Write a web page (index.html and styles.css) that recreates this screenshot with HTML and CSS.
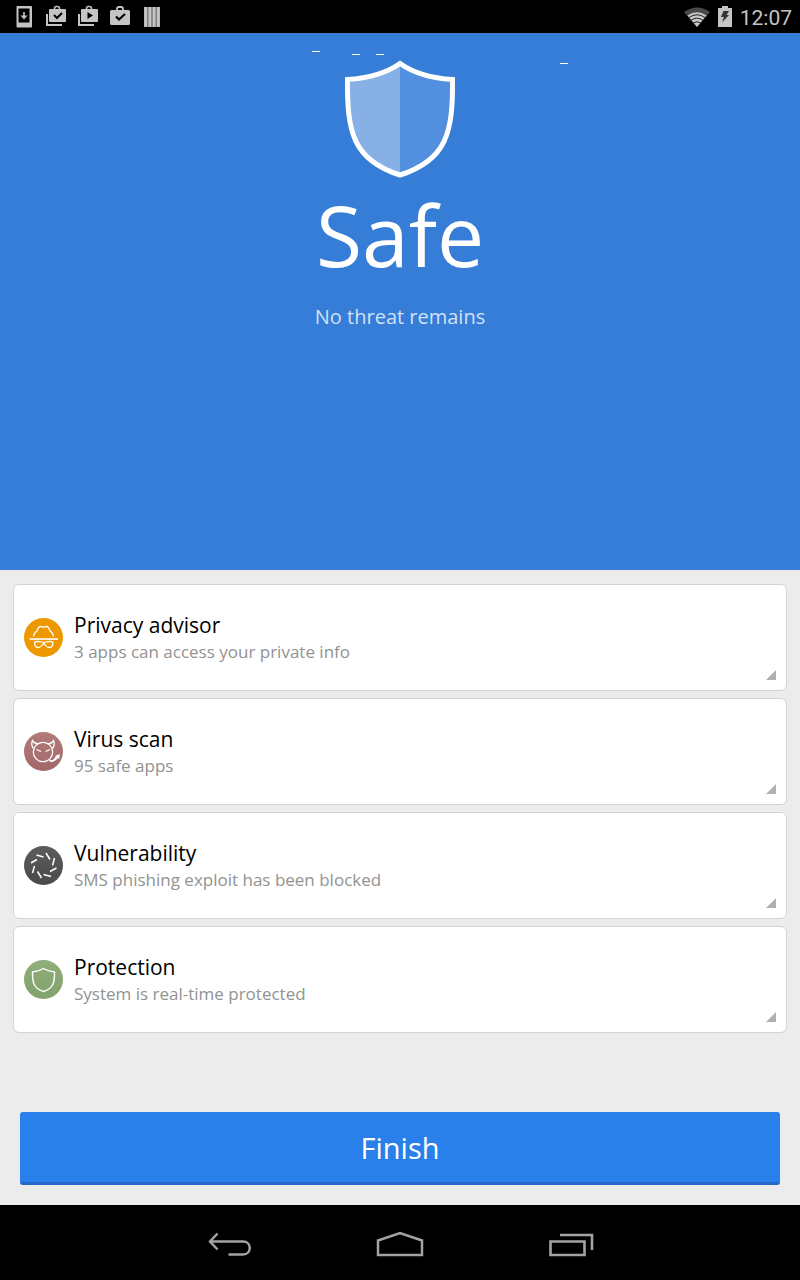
FILE: index.html
```html
<!DOCTYPE html>
<html lang="en">
<head>
<meta charset="utf-8">
<meta name="viewport" content="width=device-width, initial-scale=1">
<title>Security scan</title>
<link rel="stylesheet" href="styles.css">
</head>
<body>
<header class="status">
  <div class="status-icons">
    <svg width="32" height="32" viewBox="0 0 32 32" aria-hidden="true"><rect x="16.500" y="6" width="15.500" height="21.500" rx="1" fill="#c4c4c4"/><path d="M18.500 8.500h11v14h-11z" fill="#000"/><path d="M24 12v5" fill="none" stroke="#c4c4c4" stroke-width="1.600"/><path d="M20.500 15.500h7L24 19.500z" fill="#c4c4c4"/></svg>
    <svg width="32" height="32" viewBox="0 0 32 32" aria-hidden="true"><path d="M15 14v11h15" fill="none" stroke="#c4c4c4" stroke-width="2"/><rect x="17" y="9" width="17" height="13" rx="1" fill="#c4c4c4"/><path d="M22.500 9.500V8.500q0-2 2-2h1q2 0 2 2V9.500" fill="none" stroke="#c4c4c4" stroke-width="1.600"/><path d="M22 15l3 3 5-5" fill="none" stroke="#000" stroke-width="2"/></svg>
    <svg width="32" height="32" viewBox="0 0 32 32" aria-hidden="true"><path d="M15 14v11h15" fill="none" stroke="#c4c4c4" stroke-width="2"/><rect x="17" y="9" width="17" height="13" rx="1" fill="#c4c4c4"/><path d="M22.500 9.500V8.500q0-2 2-2h1q2 0 2 2V9.500" fill="none" stroke="#c4c4c4" stroke-width="1.600"/><path d="M23.500 12v7l5.500-3.500z" fill="#000"/></svg>
    <svg width="32" height="32" viewBox="0 0 32 32" aria-hidden="true"><rect x="14" y="10" width="20" height="15" rx="1.500" fill="#c4c4c4"/><path d="M21 10.500V9q0-2 2-2h2q2 0 2 2V10.500" fill="none" stroke="#c4c4c4" stroke-width="1.800"/><path d="M20 16.500l3 3 6-5.500" fill="none" stroke="#000" stroke-width="2.200"/></svg>
    <svg width="32" height="32" viewBox="0 0 32 32" aria-hidden="true"><path d="M16 7h16v19.500H16z" fill="#5c5c5c"/><path d="M17.700 7v20M21.900 7v20M26.100 7v20M30.300 7v20" stroke="#c4c4c4" stroke-width="3.200"/></svg>
  </div>
  <div class="status-right">
    <svg width="28" height="24" viewBox="0 0 28 24" aria-hidden="true"><path d="M1 6Q14-3 27 6L14 21z" fill="#4a4a4a"/><path d="M4.500 9.500Q14 3 23.500 9.500L14 21z" fill="#c8c8c8"/><path d="M6 11.500Q14 6 22 11.500M8 14.300Q14 10 20 14.300M10 17Q14 14.500 18 17" fill="none" stroke="#111" stroke-width=".9"/></svg>
    <svg width="16" height="24" viewBox="0 0 16 24" aria-hidden="true"><path d="M1 2h4V0h6v2h4v19H1z" fill="#c4c4c4"/><path d="M6.500 5H12l-2.500 4H12L5 16.500 7 11H4z" fill="#333"/></svg>
    <time>12:07</time>
  </div>
</header>

<main class="screen">
  <section class="hero">
    <svg class="sparks" width="256" height="14" viewBox="0 0 256 14" aria-hidden="true"><path d="M0 1.500h8M40 4.500h8M64 4.500h8M248 13.500h8" stroke="#fff"/></svg>
    <svg class="shield" width="112" height="120" viewBox="0 0 112 120" aria-hidden="true">
      <path d="M56 5Q36 19 4 21C3 74 9 102 56 117z" fill="#86b0e6"/>
      <path d="M56 5Q76 19 108 21C109 74 103 102 56 117z" fill="#538fdf"/>
      <path d="M56 5.500Q36 19.500 3.500 21.500C3 74 9 102 56 117C103 102 109 74 108.500 21.500Q76 19.500 56 5.500z" fill="none" stroke="#fff" stroke-width="5"/>
    </svg>
    <h1>Safe</h1>
    <p>No threat remains</p>
  </section>

  <section class="cards" aria-label="Scan results">
    <button class="card" type="button">
      <svg class="badge" viewBox="0 0 39 39" aria-hidden="true"><circle cx="19.500" cy="19.500" r="19.500" fill="#ee9800"/><g fill="none" stroke="#fff" stroke-width="1.300"><path d="M9.500 18.500C10 15 11 14 13 13c1-3 2-4.500 3.500-4.500 1.500 0 2 .8 3 .8s1.500-.8 3-.8S25 10 26 13c2 1 3 2 3.500 5.500"/><path d="M5.500 21h28.500" stroke-width="1.600"/><path d="M10.500 24c2-.6 5-.6 7 0 1.500.5 3 .5 4.500 0 2-.6 5-.6 7 0 0 3-1 5.500-3.500 5.500-3 0-4-1.500-5.700-4.500C18 28 17 29.500 14 29.500c-2.500 0-3.500-2.500-3.500-5.500z"/></g></svg>
      <span class="card-text"><span class="card-title">Privacy advisor</span><span class="card-note">3 apps can access your private info</span></span>
    </button>
    <button class="card" type="button">
      <svg class="badge" viewBox="0 0 39 39" aria-hidden="true"><defs><linearGradient id="red" x2="0" y2="1"><stop stop-color="#b17c7c"/><stop offset="1" stop-color="#a26868"/></linearGradient></defs><circle cx="19.500" cy="19.500" r="19.500" fill="url(#red)"/><g fill="none" stroke="#fff" stroke-width="1.300"><circle cx="19" cy="20" r="9.700"/><path d="M9.500 16.500C7.500 14 7.500 11 8.500 8.500c1.200 2.500 3 3.200 5.500 3.500M28.500 16.500c2-2.500 2-5.500 1-8-1.200 2.500-3 3.200-5.500 3.500M12.500 17.500l4.500 2M26 17.500l-4.500 2M25 28.500c4 1.800 6-1 7.500-4M26.500 29.500c3.500 0 5.500-1.500 7.500-4.500"/></g><path d="M31 24l4.800-2-.6 5z" fill="#fff"/></svg>
      <span class="card-text"><span class="card-title">Virus scan</span><span class="card-note">95 safe apps</span></span>
    </button>
    <button class="card" type="button">
      <svg class="badge" viewBox="0 0 39 39" aria-hidden="true"><defs><linearGradient id="gray" x2="0" y2="1"><stop stop-color="#5c5c5c"/><stop offset="1" stop-color="#4a4a4a"/></linearGradient></defs><circle cx="19.500" cy="19.500" r="19.500" fill="url(#gray)"/><path d="M12.500 9l7 2M22 7l4 6.500M30.500 12l-2 7.500M32.500 22l-6.500 3.500M27 30.500l-7.500-2M17.500 32l-4-6.500M8.500 27l2-7M7 17l6-3.500" fill="none" stroke="#fff" stroke-width="1.500"/></svg>
      <span class="card-text"><span class="card-title">Vulnerability</span><span class="card-note">SMS phishing exploit has been blocked</span></span>
    </button>
    <button class="card" type="button">
      <svg class="badge" viewBox="0 0 39 39" aria-hidden="true"><defs><linearGradient id="green" x2="0" y2="1"><stop stop-color="#8fae7a"/><stop offset="1" stop-color="#82a36d"/></linearGradient></defs><circle cx="19.500" cy="19.500" r="19.500" fill="url(#green)"/><path d="M19.500 8.500Q15 11.500 8.500 12C8.300 23 10 28.500 19.500 31.500 29 28.500 30.700 23 30.500 12Q24 11.500 19.500 8.500z" fill="none" stroke="#fff" stroke-width="1.400"/></svg>
      <span class="card-text"><span class="card-title">Protection</span><span class="card-note">System is real-time protected</span></span>
    </button>
  </section>

  <div class="actions"><button class="finish" type="button">Finish</button></div>
</main>

<nav class="navbar" aria-label="System">
  <button type="button" aria-label="Back"><svg width="48" height="32" viewBox="0 0 48 32" aria-hidden="true"><path d="M13.500 4.500L6 12.500l7.500 8M7 12.500h32c9 0 9 13 0 13H24.500" fill="none" stroke="#a3a3a3" stroke-width="2.500"/></svg></button>
  <button type="button" aria-label="Home"><svg width="48" height="32" viewBox="0 0 48 32" aria-hidden="true"><path d="M2 11.500L24 4l22 7.500V26H2z" fill="none" stroke="#a3a3a3" stroke-width="2.500"/></svg></button>
  <button type="button" aria-label="Recent apps"><svg width="48" height="32" viewBox="0 0 48 32" aria-hidden="true"><path d="M2.500 12.500h34V26h-34zM12 6h32v15" fill="none" stroke="#a3a3a3" stroke-width="2.600"/></svg></button>
</nav>
</body>
</html>
```
FILE: styles.css
```css
* {
  box-sizing: border-box;
}

body {
  margin: 0;
  min-height: 100vh;
  display: flex;
  flex-direction: column;
  background: #ececec;
  font-family: "Open Sans", "Noto Sans", sans-serif;
}

svg {
  display: block;
  flex: none;
}

button {
  border: 0;
  padding: 0;
  font: inherit;
  cursor: pointer;
}

.status {
  display: flex;
  justify-content: space-between;
  align-items: flex-start;
  height: 33px;
  padding-right: 8px;
  background: #000;
  color: #c4c4c4;
}

.status-icons,
.status-right {
  display: flex;
  align-items: center;
}

.status-icons svg {
  overflow: visible;
}

.status-right {
  gap: 7px;
}

.status-right svg:first-child {
  margin-right: -1px;
}

.status-right time {
  font: 21px/36px Roboto, sans-serif;
}

.screen {
  flex: 1;
  display: flex;
  flex-direction: column;
}

.hero {
  position: relative;
  flex: 1;
  display: flex;
  flex-direction: column;
  align-items: center;
  padding: 25px 16px;
  background: #357dd6;
  color: #fff;
  text-align: center;
}

.sparks {
  position: absolute;
  top: 17px;
  left: calc(50% - 88px);
}

.hero h1 {
  margin: 0;
  font-size: 84px;
  line-height: 114px;
  font-weight: 400;
}

.hero p {
  margin: 11px 0 0;
  font-size: 20px;
  line-height: 28px;
  color: #d0e1f6;
}

.cards {
  display: flex;
  flex-direction: column;
  gap: 7px;
  padding: 14px 13px;
}

.card {
  position: relative;
  display: flex;
  align-items: center;
  gap: 11px;
  min-height: 107px;
  padding: 10px;
  border: 1px solid #d3d3d3;
  border-radius: 6px;
  background: #fff;
  text-align: left;
}

.card::after {
  content: "";
  position: absolute;
  right: 10px;
  bottom: 10px;
  width: 10px;
  height: 10px;
  background: #b0b0b0;
  clip-path: polygon(100% 0, 100% 100%, 0 100%);
}

.badge {
  width: 39px;
  height: 39px;
}

.card-text {
  display: flex;
  flex-direction: column;
}

.card-title {
  font-size: 21px;
  line-height: 28px;
  color: #000;
}

.card-note {
  font-size: 17px;
  line-height: 26px;
  color: #929292;
}

.actions {
  display: flex;
  padding: 65px 20px 20px;
}

.finish {
  flex: 1;
  height: 73px;
  padding-top: 2px;
  border-bottom: 3px solid #2569c8;
  border-radius: 3px;
  background: #2a80ea;
  color: #fff;
  font-size: 29px;
  line-height: 40px;
}

.navbar {
  display: flex;
  justify-content: center;
  align-items: center;
  gap: 124px;
  height: 75px;
  padding-top: 4px;
  background: #000;
}

.navbar button {
  background: none;
}
```
